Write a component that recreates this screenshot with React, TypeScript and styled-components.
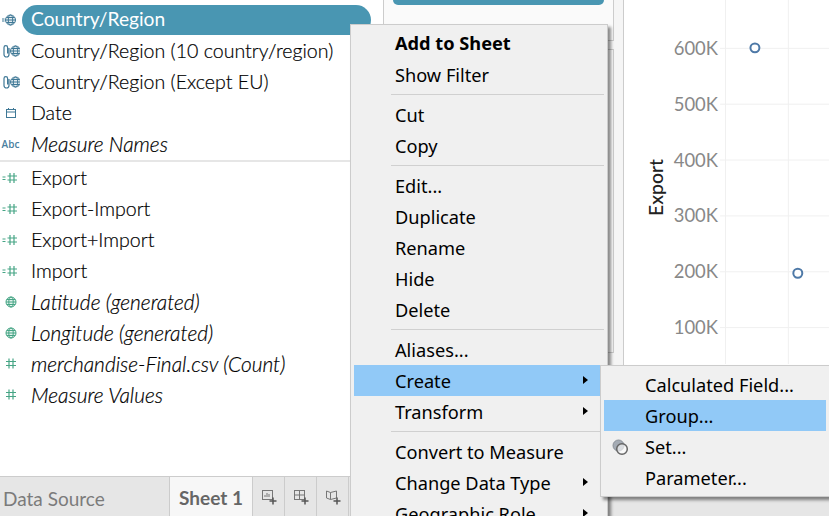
import React from "react";
import styled, { createGlobalStyle } from "styled-components";

const GlobalStyle = createGlobalStyle`
  html, body {
    margin: 0;
    padding: 0;
    background: #fff;
    overflow: hidden;
  }
  * {
    box-sizing: border-box;
  }
`;

const Page = styled.div`
  position: relative;
  display: flex;
  width: 829px;
  height: 516px;
  overflow: hidden;
  font-family: Lato, "Liberation Sans", sans-serif;
`;

/* left data pane */
const Sidebar = styled.aside`
  display: flex;
  flex-direction: column;
  flex: 0 0 350px;
  min-width: 0;
  height: 516px;
`;
const FieldList = styled.ul`
  flex: 1;
  margin: 0;
  padding: 4px 0 0;
  list-style: none;
`;
const FieldRow = styled.li`
  display: flex;
  align-items: center;
  height: 31px;
`;
const FieldIcon = styled.span`
  display: flex;
  justify-content: center;
  flex: 0 0 21px;
  margin-right: 10px;
`;
const FieldName = styled.span<{ $italic?: boolean }>`
  font-size: ${(p) => (p.$italic ? "20.9px" : "19.6px")};
  line-height: 31px;
  color: #000;
  white-space: nowrap;
  font-style: ${(p) => (p.$italic ? "italic" : "normal")};
  font-weight: 300;
  -webkit-text-stroke: 0.2px #000;
`;
const Pill = styled.span`
  position: relative;
  z-index: 1;
  flex: 0 0 349px;
  align-self: flex-start;
  height: 30px;
  margin-top: 1px;
  margin-left: -9px;
  padding-left: 9px;
  border-radius: 15px;
  background: #4996b2;
  color: #fff;
  font-size: 19.2px;
  line-height: 28px;
`;
const AbcIcon = styled.span`
  font-size: 10px;
  font-weight: 600;
  color: #4a7f9f;
  font-family: "Open Sans", sans-serif;
`;
const Divider = styled.div`
  height: 2px;
  margin-top: 1px;
  background: #e6e6e6;
`;

const TabBar = styled.div`
  display: flex;
  height: 40px;
  border-top: 1px solid #ccc;
  background: #e6e6e6;
`;
const DataTab = styled.div`
  flex: 0 0 169px;
  padding-left: 3px;
  font-size: 19px;
  line-height: 44px;
  color: #7b7b7b;
`;
const SheetTab = styled.div`
  flex: 0 0 84px;
  text-align: center;
  border-left: 1px solid #ccc;
  border-right: 1px solid #ccc;
  background: #f7f7f7;
  font-size: 19px;
  font-weight: 700;
  line-height: 42px;
  color: #666;
`;
const IconTab = styled.div`
  display: flex;
  align-items: center;
  justify-content: center;
  flex: 0 0 32px;
  border-right: 1px solid #ccc;
`;

/* shelves behind the menu */
const MiddleColumn = styled.section`
  display: flex;
  flex-direction: column;
  flex: 0 0 274px;
  height: 516px;
`;
const Shelves = styled.div`
  display: flex;
  flex-direction: column;
  flex: 0 0 366px;
  padding-left: 33px;
  padding-right: 9px;
  border-right: 1px solid #ccc;
  border-bottom: 1px solid #ccc;
  background: linear-gradient(to right, #fff 33px, #f5f5f5 33px);
`;
const TopCard = styled.div`
  height: 41px;
  padding: 0 9px;
  border: 1px solid #ccc;
  border-top: 0;
  background: #fafafa;
`;
const ShelfPill = styled.div`
  height: 5px;
  border-radius: 0 0 10px 10px;
  background: #4996b2;
`;
const MainCard = styled.div`
  height: 304px;
  margin-top: 8px;
  border: 1px solid #ccc;
  background: #fafafa;
`;

/* scatter chart */
const ChartColumn = styled.section`
  display: flex;
  flex-direction: column;
  flex: 1;
  min-width: 0;
  height: 516px;
`;
const Chart = styled.svg`
  display: block;
  flex: 0 0 366px;
  border-bottom: 1px solid #ccc;
`;
const AxisLabel = styled.text`
  font-family: Lato, sans-serif;
  font-size: 18.5px;
  fill: #888;
  text-anchor: end;
`;
const AxisTitle = styled.text`
  font-family: Lato, sans-serif;
  font-size: 19.5px;
  font-weight: 500;
  fill: #222;
  text-anchor: middle;
`;
const BottomStrip = styled.div`
  flex: 1;
  background: #e6e6e6;
`;

/* context menus */
const Menu = styled.div<{ $left: number; $top: number; $width: number; $layer: number }>`
  position: absolute;
  left: ${(p) => p.$left}px;
  top: ${(p) => p.$top}px;
  width: ${(p) => p.$width}px;
  z-index: ${(p) => p.$layer};
  padding: 3px;
  border: 1px solid #ccc;
  background: #f0f0f0;
  box-shadow: 3px 3px 3px rgba(0, 0, 0, 0.45);
  font-family: "Noto Sans", "Open Sans", sans-serif;
`;
const MenuItem = styled.div<{ $active?: boolean; $bold?: boolean }>`
  position: relative;
  height: 31px;
  padding-left: 41px;
  font-size: 18.2px;
  line-height: ${(p) => (p.$bold ? 31 : 33)}px;
  color: #000;
  white-space: nowrap;
  font-weight: ${(p) => (p.$bold ? 700 : 400)};
  background: ${(p) => (p.$active ? "#91c9f7" : "transparent")};
`;
const MenuLine = styled.div`
  height: 1px;
  margin: 4px 0 4px 37px;
  background: #d0d0d0;
`;
const SubArrow = styled.span`
  position: absolute;
  right: 16px;
  top: 11px;
  border-left: 5px solid #000;
  border-top: 4px solid transparent;
  border-bottom: 4px solid transparent;
`;
const SetGlyph = styled.svg`
  position: absolute;
  left: 8px;
  top: 8px;
`;

const BLUE = "#3f7896";
const GREEN = "#46a585";

const Globe = ({ color, x = 0 }: { color: string; x?: number }) => (
  <g transform={`translate(${x} 0)`} fill="none" stroke={color} strokeWidth="1">
    <circle cx="6" cy="7" r="5" fill={color} fillOpacity="0.15" />
    <ellipse cx="6" cy="7" rx="2.2" ry="5" />
    <path d="M1 7h10M2 4.500h8M2 9.500h8" />
  </g>
);

const GlobeDim = ({ color = BLUE }: { color?: string }) => (
  <svg width="18" height="14" viewBox="0 0 18 14">
    <path d="M0 6h2.500M0 8h2.500" stroke={color} strokeWidth="1" />
    <Globe color={color} x={2.5} />
  </svg>
);

const ClipGlobe = () => (
  <svg width="18" height="14" viewBox="0 0 18 14">
    <path
      d="M7 4v6.500a2.500 2.500 0 0 1-5 0V3.500a1.800 1.800 0 0 1 3.600 0V9.500"
      fill="none"
      stroke={BLUE}
      strokeWidth="1.200"
    />
    <Globe color={BLUE} x={7.5} />
  </svg>
);

const Calendar = () => (
  <svg width="12" height="12" viewBox="0 0 12 12" fill="none" stroke={BLUE} strokeWidth="1">
    <rect x="1.500" y="2.500" width="9" height="8" />
    <path d="M1.500 5h9M3.500 1v2M8.500 1v2" />
  </svg>
);

const Hash = () => (
  <svg width="10" height="11" viewBox="0 0 10 11" fill="none" stroke={GREEN} strokeWidth="1.200">
    <path d="M3 .5v10M7 .5v10M0 3.500h10M0 7.500h10" />
  </svg>
);

const MeasureHash = () => (
  <svg width="18" height="12" viewBox="0 0 18 12" fill="none" stroke={GREEN} strokeWidth="1.200">
    <path d="M.5 5h3M.5 7.500h3" />
    <path d="M8 1v10M12 1v10M5.500 4h9.500M5.500 8h9.500" />
  </svg>
);

const GreenGlobe = () => (
  <svg width="12" height="14" viewBox="0 0 12 14">
    <Globe color={GREEN} />
  </svg>
);

const AddSheetIcon = ({ kind }: { kind: "sheet" | "dash" | "story" }) => (
  <svg width="16" height="16" viewBox="0 0 16 16" fill="none" stroke="#777" strokeWidth="1">
    {kind === "sheet" && (
      <>
        <rect x="1.500" y="1.500" width="10" height="9" />
        <path d="M4 8V6M6 8V4M8 8V5" />
      </>
    )}
    {kind === "dash" && (
      <>
        <rect x="1.500" y="1.500" width="10" height="9" />
        <path d="M1.500 6h10M6.500 1.500v9" />
      </>
    )}
    {kind === "story" && <path d="M1.500 2l4 1.500 6-1.500v7l-6 1.500-4-1.500zM5.500 3.500v7" />}
    <path d="M12 8.500v7M8.500 12h7" stroke="#555" strokeWidth="1.500" />
  </svg>
);

const dimensions = [
  { name: "Country/Region (10 country/region)", icon: <ClipGlobe /> },
  { name: "Country/Region (Except EU)", icon: <ClipGlobe /> },
  { name: "Date", icon: <Calendar /> },
  { name: "Measure Names", icon: <AbcIcon>Abc</AbcIcon>, italic: true },
];

const measures = [
  { name: "Export", icon: <MeasureHash /> },
  { name: "Export-Import", icon: <MeasureHash /> },
  { name: "Export+Import", icon: <MeasureHash /> },
  { name: "Import", icon: <MeasureHash /> },
  { name: "Latitude (generated)", icon: <GreenGlobe />, italic: true },
  { name: "Longitude (generated)", icon: <GreenGlobe />, italic: true },
  { name: "merchandise-Final.csv (Count)", icon: <Hash />, italic: true },
  { name: "Measure Values", icon: <Hash />, italic: true },
];

const ticks = [
  { label: "600K", y: 48 },
  { label: "500K", y: 104 },
  { label: "400K", y: 160 },
  { label: "300K", y: 216 },
  { label: "200K", y: 272 },
  { label: "100K", y: 328 },
];

const menuItems = [
  { label: "Add to Sheet", bold: true },
  { label: "Show Filter" },
  "-",
  { label: "Cut" },
  { label: "Copy" },
  "-",
  { label: "Edit..." },
  { label: "Duplicate" },
  { label: "Rename" },
  { label: "Hide" },
  { label: "Delete" },
  "-",
  { label: "Aliases..." },
  { label: "Create", active: true, sub: true },
  { label: "Transform", sub: true },
  "-",
  { label: "Convert to Measure" },
  { label: "Change Data Type", sub: true },
  { label: "Geographic Role", sub: true },
] as const;

const App: React.FC = () => {
  return (
    <>
      <GlobalStyle />
      <Page>
        <Sidebar>
          <FieldList>
            <FieldRow>
              <FieldIcon>
                <GlobeDim />
              </FieldIcon>
              <Pill>Country/Region</Pill>
            </FieldRow>
            {dimensions.map((f) => (
              <FieldRow key={f.name}>
                <FieldIcon>{f.icon}</FieldIcon>
                <FieldName $italic={f.italic}>{f.name}</FieldName>
              </FieldRow>
            ))}
            <Divider />
            {measures.map((f) => (
              <FieldRow key={f.name}>
                <FieldIcon>{f.icon}</FieldIcon>
                <FieldName $italic={f.italic}>{f.name}</FieldName>
              </FieldRow>
            ))}
          </FieldList>
          <TabBar>
            <DataTab>Data Source</DataTab>
            <SheetTab>Sheet 1</SheetTab>
            <IconTab>
              <AddSheetIcon kind="sheet" />
            </IconTab>
            <IconTab>
              <AddSheetIcon kind="dash" />
            </IconTab>
            <IconTab>
              <AddSheetIcon kind="story" />
            </IconTab>
          </TabBar>
        </Sidebar>

        <MiddleColumn>
          <Shelves>
            <TopCard>
              <ShelfPill />
            </TopCard>
            <MainCard />
          </Shelves>
          <BottomStrip />
        </MiddleColumn>

        <ChartColumn>
          <Chart width="205" height="366" viewBox="0 0 205 366">
            <g stroke="#f0f0f0" strokeWidth="1">
              <path d="M101.500 0v365M164.500 0v365" />
              {ticks.map((t) => (
                <path key={t.y} d={`M96 ${t.y + 0.5}h110`} />
              ))}
            </g>
            {ticks.map((t) => (
              <AxisLabel key={t.label} x="94" y={t.y + 7}>
                {t.label}
              </AxisLabel>
            ))}
            <AxisTitle transform="translate(39 188) rotate(-90)">Export</AxisTitle>
            <g fill="#fff" stroke="#4e79a7" strokeWidth="2">
              <circle cx="131" cy="48" r="4.500" />
              <circle cx="174" cy="274" r="4.500" />
            </g>
          </Chart>
          <BottomStrip />
        </ChartColumn>

        <Menu $left={350} $top={24} $width={258} $layer={2}>
          {menuItems.map((item, i) =>
            item === "-" ? (
              <MenuLine key={i} />
            ) : (
              <MenuItem
                key={item.label}
                $bold={"bold" in item}
                $active={"active" in item}
              >
                {item.label}
                {"sub" in item && <SubArrow />}
              </MenuItem>
            )
          )}
        </Menu>

        <Menu $left={600} $top={365} $width={230} $layer={3}>
          <MenuItem>Calculated Field...</MenuItem>
          <MenuItem $active>Group...</MenuItem>
          <MenuItem>
            <SetGlyph width="18" height="18" viewBox="0 0 18 18">
              <circle cx="6.500" cy="6.500" r="5.500" fill="#a4abb4" stroke="#8a9098" />
              <circle cx="10" cy="10" r="5.300" fill="#fff" fillOpacity="0.6" stroke="#666" strokeWidth="1.500" />
            </SetGlyph>
            Set...
          </MenuItem>
          <MenuItem>Parameter...</MenuItem>
        </Menu>
      </Page>
    </>
  );
};

export default App;
